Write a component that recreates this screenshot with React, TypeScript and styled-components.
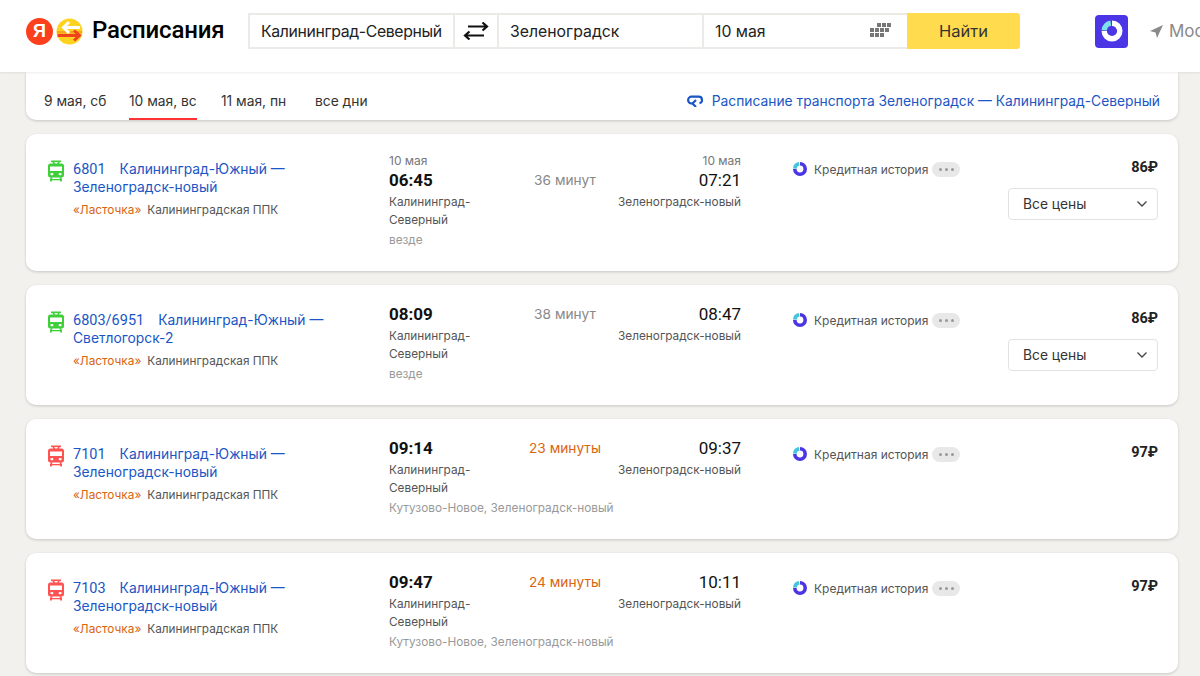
import React from "react";
import styled, { createGlobalStyle } from "styled-components";

const GlobalStyle = createGlobalStyle`
  html, body {
    margin: 0;
    padding: 0;
    background: #f3f1ed;
    font-family: Inter, "Noto Sans", sans-serif;
    color: #000;
    overflow: hidden;
  }
`;

const Page = styled.div`
  width: 1200px;
  height: 676px;
  overflow: hidden;
`;

const Header = styled.header`
  position: relative;
  z-index: 1;
  display: flex;
  align-items: center;
  height: 72px;
  padding: 0 0 10px 26px;
  box-sizing: border-box;
  background: #fff;
  box-shadow: 0 1px 2px rgba(0, 0, 0, 0.08);
  overflow: hidden;
  white-space: nowrap;
`;

const LogoRow = styled.div`
  display: flex;
  align-items: center;
  gap: 3px;
  width: 222px;
  flex: none;
`;

const YaBadge = styled.span`
  display: flex;
  align-items: center;
  justify-content: center;
  width: 27px;
  height: 27px;
  border-radius: 50%;
  background: #fc3f1d;
  color: #fff;
  font: 700 18px "Liberation Sans", sans-serif;
`;

const BrandName = styled.span`
  margin-left: 6px;
  margin-top: -2px;
  font: 500 24px Roboto, sans-serif;
  letter-spacing: -0.2px;
`;

const SearchBar = styled.div`
  display: flex;
  height: 36px;
  width: 772px;
  flex: none;
`;

const Field = styled.div<{ $width: number; $tight?: boolean }>`
  display: flex;
  align-items: center;
  justify-content: space-between;
  box-sizing: border-box;
  width: ${(p) => p.$width}px;
  padding: 0 15px 0 11px;
  border: 2px solid #eceae6;
  border-right-width: 0;
  font-size: 15.8px;
  letter-spacing: ${(p) => (p.$tight ? "-0.35px" : "0")};
  color: #222;
`;

const SwapButton = styled(Field)`
  justify-content: center;
  padding: 0;
`;

const FindButton = styled.button`
  width: 113px;
  border: 0;
  border-radius: 0 3px 3px 0;
  background: #ffdb4d;
  font: 400 16.5px Inter, sans-serif;
  color: #333;
`;

const AppIcon = styled.span`
  display: flex;
  align-items: center;
  justify-content: center;
  width: 33px;
  height: 33px;
  margin-left: 75px;
  flex: none;
  border-radius: 4px;
  background: #4b35e5;
`;

const Region = styled.span`
  display: flex;
  align-items: center;
  gap: 6px;
  margin-left: 22px;
  font-size: 17px;
  color: #8a8a8a;
`;

const Content = styled.main`
  display: flex;
  flex-direction: column;
  gap: 14px;
  margin: 0 22px 0 26px;
`;

const TabsCard = styled.nav`
  display: flex;
  align-items: stretch;
  justify-content: space-between;
  height: 48px;
  padding: 0 18px;
  background: #fff;
  border-radius: 0 0 10px 10px;
  box-shadow: 0 1px 3px rgba(0, 0, 0, 0.18);
`;

const Tabs = styled.div`
  display: grid;
  grid-template-columns: 85px 92px 94px auto;
`;

const Tab = styled.span<{ $active?: boolean }>`
  display: flex;
  align-items: center;
  justify-self: start;
  padding-top: 12px;
  box-sizing: border-box;
  font-size: 13.8px;
  color: #333;
  border-bottom: 2px solid ${(p) => (p.$active ? "#f33" : "transparent")};
`;

const BackLink = styled.a`
  display: flex;
  align-items: center;
  gap: 9px;
  padding-top: 12px;
  padding-bottom: 2px;
  font-size: 13.82px;
  color: #1a56c5;
`;

const Card = styled.article`
  display: grid;
  grid-template-columns: 26px 316px 352px 1fr;
  padding: 19px 20px 22px 21px;
  background: #fff;
  border-radius: 10px;
  box-shadow: 0 1px 3px rgba(0, 0, 0, 0.18);
`;

const IconCell = styled.div`
  padding-top: 7px;
`;

const Title = styled.a`
  display: block;
  width: 255px;
  margin-top: 7px;
  font-size: 13.85px;
  line-height: 18px;
  color: #1a56c5;
`;

const TrainNumber = styled.span`
  margin-right: 14px;
  font-family: Roboto, sans-serif;
  font-size: 14.5px;
  line-height: 1;
`;

const Meta = styled.div`
  display: flex;
  gap: 6px;
  margin-top: 5px;
  font-size: 11.8px;
  line-height: 18px;
  color: #555;
`;

const Brand = styled.span`
  color: #d9650f;
`;

const Trip = styled.div`
  display: grid;
  grid-template-columns: 120px 108px 124px;
  align-content: start;
`;

const DateLabel = styled.div<{ $right?: boolean }>`
  height: 17px;
  font-size: 12px;
  line-height: 15px;
  color: #777;
  text-align: ${(p) => (p.$right ? "right" : "left")};
`;

const Time = styled.div<{ $bold?: boolean; $right?: boolean }>`
  font-family: Roboto, sans-serif;
  font-size: 17px;
  line-height: 21px;
  font-weight: ${(p) => (p.$bold ? 700 : 400)};
  text-align: ${(p) => (p.$right ? "right" : "left")};
  color: #111;
`;

const Duration = styled.div<{ $fast?: boolean }>`
  padding-left: 4px;
  font-size: 13.7px;
  line-height: 21px;
  text-align: center;
  color: ${(p) => (p.$fast ? "#d9650f" : "#888")};
`;

const Station = styled.div<{ $right?: boolean }>`
  margin-top: 2px;
  font-size: 11.8px;
  line-height: 18px;
  color: #555;
  text-align: ${(p) => (p.$right ? "right" : "left")};
`;

const Stops = styled.div`
  grid-column: 1 / -1;
  margin-top: 2px;
  font-size: 11.8px;
  line-height: 18px;
  color: #999;
`;

const Side = styled.div`
  display: flex;
  justify-content: space-between;
  margin-top: 7px;
  padding-left: 51px;
`;

const Credit = styled.div`
  display: flex;
  align-items: center;
  gap: 6px;
  height: 18px;
  font-size: 12px;
  color: #555;
`;

const MoreDots = styled.span`
  display: flex;
  align-items: center;
  justify-content: center;
  gap: 3px;
  width: 28px;
  height: 15px;
  margin-left: -2px;
  border-radius: 8px;
  background: #e8e8e8;
`;

const Dot = styled.i`
  width: 3px;
  height: 3px;
  border-radius: 50%;
  background: #999;
`;

const PriceColumn = styled.div`
  display: flex;
  flex-direction: column;
  align-items: flex-end;
`;

const Price = styled.div`
  margin-top: -1px;
  font-family: Roboto, sans-serif;
  font-size: 14.5px;
  line-height: 18px;
  font-weight: 700;
  color: #222;
`;

const PriceSelect = styled.div`
  display: flex;
  align-items: center;
  justify-content: space-between;
  box-sizing: border-box;
  width: 150px;
  height: 32px;
  margin-top: 11px;
  padding: 0 9px 1px 14px;
  border: 1px solid #e2e2e2;
  border-radius: 4px;
  font-size: 13.8px;
  color: #333;
`;

const TrainIcon = ({ color }: { color: string }) => (
  <svg width="18" height="22" viewBox="0 0 18 22">
    <rect x="4" y="0.500" width="10" height="1.600" fill={color} />
    <path d="M5.500 2h1.700l1 2H6.500zM11 2h1.700l-1 2H10z" fill={color} />
    <rect x="1" y="3.500" width="16" height="14" rx="2.500" fill={color} />
    <rect x="3" y="6.500" width="12" height="4.500" fill="#fff" />
    <rect x="3.400" y="13" width="3" height="2.200" rx="1" fill="#fff" />
    <rect x="11.600" y="13" width="3" height="2.200" rx="1" fill="#fff" />
    <path d="M3.600 17.300h1.800L4.700 21.500H2.900zM12.600 17.300h1.800l.7 4.200h-1.800z" fill={color} />
    <rect x="3" y="19" width="12" height="1.300" fill={color} />
  </svg>
);

const RingLogo = ({ size, onDark }: { size: number; onDark?: boolean }) => (
  <svg width={size} height={size} viewBox="0 0 20 20" fill="none" strokeWidth="4.500">
    <path d="M10 3.500a6.500 6.500 0 1 1-6.500 6.500" stroke={onDark ? "#fff" : "#4b35e5"} />
    <path d="M3.500 9.500a6.500 6.500 0 0 1 5.500-6" stroke={onDark ? "#7fe0ee" : "#45c4dd"} />
  </svg>
);

const routes = [
  {
    number: "6801",
    title: "Калининград-Южный — Зеленоградск-новый",
    color: "#3fcf3a",
    date: "10 мая",
    from: "06:45",
    to: "07:21",
    duration: "36 минут",
    stops: "везде",
    price: "86",
  },
  {
    number: "6803/6951",
    title: "Калининград-Южный — Светлогорск-2",
    color: "#3fcf3a",
    from: "08:09",
    to: "08:47",
    duration: "38 минут",
    stops: "везде",
    price: "86",
  },
  {
    number: "7101",
    title: "Калининград-Южный — Зеленоградск-новый",
    color: "#ff5252",
    from: "09:14",
    to: "09:37",
    duration: "23 минуты",
    fast: true,
    stops: "Кутузово-Новое, Зеленоградск-новый",
    price: "97",
  },
  {
    number: "7103",
    title: "Калининград-Южный — Зеленоградск-новый",
    color: "#ff5252",
    from: "09:47",
    to: "10:11",
    duration: "24 минуты",
    fast: true,
    stops: "Кутузово-Новое, Зеленоградск-новый",
    price: "97",
  },
];

const App = () => {
  return (
    <Page>
      <GlobalStyle />
      <Header>
        <LogoRow>
          <YaBadge>Я</YaBadge>
          <svg width="27" height="27" viewBox="0 0 27 27" fill="none">
            <circle cx="13.500" cy="13.500" r="13" fill="#ffd21f" />
            <path d="M1 13h25v2.500H1z" fill="#f9a51a" />
            <path d="M1.500 17.500H23M18 12.500l5.500 5-5.500 5" stroke="#f0421c" strokeWidth="3" />
            <path d="M24 9.500H7.500M13 4l-5.500 5.500L13 15" stroke="#fff" strokeWidth="3" />
          </svg>
          <BrandName>Расписания</BrandName>
        </LogoRow>
        <SearchBar>
          <Field $width={205} $tight>Калининград-Северный</Field>
          <SwapButton $width={44}>
            <svg width="26" height="18" viewBox="0 0 26 18" fill="none" stroke="#111" strokeWidth="2.200">
              <path d="M5 4.500h19M19.500.500l4.500 4-4.500 4" />
              <path d="M2 13.500h19M6.500 9.500l-4.500 4 4.500 4" />
            </svg>
          </SwapButton>
          <Field $width={205}>Зеленоградск</Field>
          <Field $width={205}>
            10 мая
            <svg width="22" height="16" viewBox="0 0 22 16" fill="#777">
              <path d="M7 0h4v4H7zM12 0h4v4h-4zM17 0h4v4h-4zM0 5h4v4H0zM5 5h4v4H5zM10 5h4v4h-4zM15 5h4v4h-4zM0 10h4v4H0zM5 10h4v4H5zM10 10h4v4h-4z" />
            </svg>
          </Field>
          <FindButton>Найти</FindButton>
        </SearchBar>
        <AppIcon>
          <RingLogo size={24} onDark />
        </AppIcon>
        <Region>
          <svg width="13" height="13" viewBox="0 0 13 13" fill="#8a8a8a">
            <path d="M13 0L0 6l5.500 1.500L7 13z" />
          </svg>
          Москва
        </Region>
      </Header>
      <Content>
        <TabsCard>
          <Tabs>
            <Tab>9 мая, сб</Tab>
            <Tab $active>10 мая, вс</Tab>
            <Tab>11 мая, пн</Tab>
            <Tab>все дни</Tab>
          </Tabs>
          <BackLink>
            <svg width="16" height="12" viewBox="0 0 16 12" fill="none" stroke="#1a56c5" strokeWidth="2.200">
              <path d="M6 8.500H4.500a3.300 3.300 0 0 1 0-6.800h7a3.300 3.300 0 0 1 1 6.500" />
              <path d="M9 5l-3.500 3.500L9 12" />
            </svg>
            Расписание транспорта Зеленоградск — Калининград-Северный
          </BackLink>
        </TabsCard>
        {routes.map((route) => (
          <Card key={route.number}>
            <IconCell>
              <TrainIcon color={route.color} />
            </IconCell>
            <div>
              <Title>
                <TrainNumber>{route.number}</TrainNumber>
                {route.title}
              </Title>
              <Meta>
                <Brand>«Ласточка»</Brand>
                Калининградская ППК
              </Meta>
            </div>
            <Trip>
              {route.date && (
                <>
                  <DateLabel>{route.date}</DateLabel>
                  <span />
                  <DateLabel $right>{route.date}</DateLabel>
                </>
              )}
              <Time $bold>{route.from}</Time>
              <Duration $fast={route.fast}>{route.duration}</Duration>
              <Time $right>{route.to}</Time>
              <Station>Калининград-Северный</Station>
              <span />
              <Station $right>Зеленоградск-новый</Station>
              <Stops>{route.stops}</Stops>
            </Trip>
            <Side>
              <Credit>
                <RingLogo size={16} />
                Кредитная история
                <MoreDots>
                  <Dot />
                  <Dot />
                  <Dot />
                </MoreDots>
              </Credit>
              <PriceColumn>
                <Price>{route.price}₽</Price>
                {route.price === "86" && (
                  <PriceSelect>
                    Все цены
                    <svg width="12" height="8" viewBox="0 0 12 8" fill="none" stroke="#444" strokeWidth="1.300">
                      <path d="M1.500 1.500L6 6l4.500-4.500" />
                    </svg>
                  </PriceSelect>
                )}
              </PriceColumn>
            </Side>
          </Card>
        ))}
      </Content>
    </Page>
  );
};

export default App;
